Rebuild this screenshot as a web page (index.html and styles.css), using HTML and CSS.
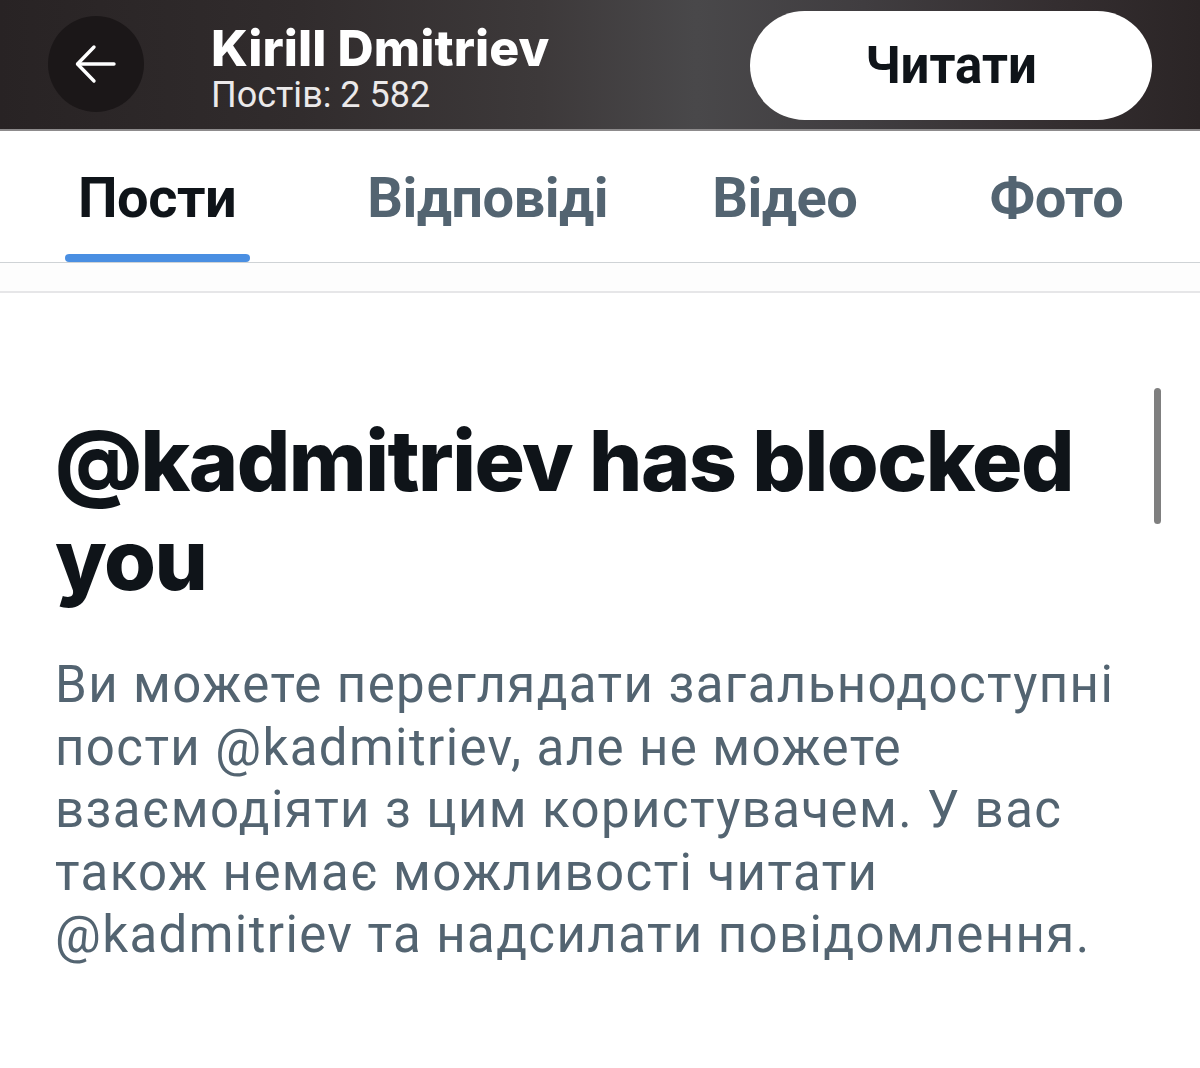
FILE: index.html
```html
<!DOCTYPE html>
<html lang="uk">
<head>
<meta charset="utf-8">
<title>Kirill Dmitriev</title>
<link rel="stylesheet" href="styles.css">
</head>
<body>
<div class="page">
  <header class="topbar">
    <div class="back">
      <svg width="44" height="44" viewBox="0 0 44 44" fill="none" stroke="#fff" stroke-width="3.4" stroke-linecap="round" stroke-linejoin="round">
        <path d="M40 22H4"/>
        <path d="M20 5L3.5 22L20 39"/>
      </svg>
    </div>
    <div class="title">
      <div class="name">Kirill Dmitriev</div>
      <div class="count">Постів: 2 582</div>
    </div>
    <button class="follow">Читати</button>
  </header>

  <nav class="tabs">
    <div class="tab tab-posts active">Пости<span class="indicator"></span></div>
    <div class="tab tab-replies">Відповіді</div>
    <div class="tab tab-video">Відео</div>
    <div class="tab tab-photo">Фото</div>
  </nav>
  <div class="gap-row"></div>

  <main class="blocked">
    <h1 class="blocked-title">@kadmitriev has blocked you</h1>
    <p class="blocked-text">Ви можете переглядати загальнодоступні пости @kadmitriev, але не можете взаємодіяти з цим користувачем. У вас також немає можливості читати @kadmitriev та надсилати повідомлення.</p>
  </main>

  <div class="scrollbar"></div>
</div>
</body>
</html>
```

FILE: styles.css
```css
* { box-sizing: border-box; }
html, body { margin: 0; padding: 0; background: #ffffff; }
body { font-family: Roboto, "Noto Sans", sans-serif; }

.page {
  position: relative;
  width: 1200px;
  height: 1068px;
  overflow: hidden;
  background: #ffffff;
}

.topbar {
  height: 131px;
  display: flex;
  align-items: center;
  padding-left: 48px;
  padding-right: 48px;
  background: linear-gradient(90deg, #282324 0%, #312c2d 25%, #3d393a 45%, #49484a 58%, #403d40 72%, #342e30 88%, #2b2526 100%);
  border-bottom: 2px solid #8d8b8c;
}

.back {
  width: 96px;
  height: 96px;
  border-radius: 50%;
  background: #1b1718;
  display: flex;
  align-items: center;
  justify-content: center;
  flex: none;
  margin-top: -1px;
}

.title {
  align-self: flex-start;
  margin-top: 21px;
  margin-left: 67px;
  color: #ffffff;
  display: flex;
  flex-direction: column;
}

.name {
  font-family: Inter, "Noto Sans", sans-serif;
  font-weight: 800;
  font-size: 50px;
  line-height: 54px;
  letter-spacing: 0.1px;
}

.count {
  font-family: Roboto, sans-serif;
  font-weight: 400;
  font-size: 36px;
  line-height: 40px;
  color: #ebe9ea;
}

.follow {
  margin-left: auto;
  width: 402px;
  height: 109px;
  border: none;
  border-radius: 55px;
  background: #ffffff;
  color: #0f1419;
  font-family: Roboto, sans-serif;
  font-weight: 700;
  font-size: 51px;
  padding: 0;
  margin-top: 2px;
}

.tabs {
  height: 132px;
  display: flex;
  align-items: flex-start;
  border-bottom: 1px solid #cfd3d6;
  padding-top: 38px;
}

.tab {
  position: relative;
  font-family: Roboto, sans-serif;
  font-weight: 700;
  font-size: 56px;
  line-height: 58px;
  color: #536471;
  letter-spacing: -0.5px;
}

.tab.active { color: #0f1419; }

.tab-posts { margin-left: 78px; }
.tab-replies { margin-left: 131px; }
.tab-video { margin-left: 104px; }
.tab-photo { margin-left: 132px; }

.indicator {
  position: absolute;
  left: -13px;
  right: -14px;
  top: 85px;
  height: 8px;
  border-radius: 4px;
  background: #4a8fe2;
}

.gap-row {
  height: 30px;
  border-bottom: 2px solid #e6e6e8;
  background: #fdfdfd;
}

.blocked {
  padding: 118px 55px 0 55px;
}

.blocked-title {
  margin: 0;
  font-family: Inter, "Noto Sans", sans-serif;
  font-weight: 800;
  font-size: 84px;
  line-height: 99px;
  color: #0f1419;
  letter-spacing: -1.5px;
}

.blocked-text {
  margin: 45px 0 0 0;
  font-family: Roboto, sans-serif;
  font-weight: 400;
  font-size: 51px;
  line-height: 62.5px;
  color: #536471;
  letter-spacing: 1.4px;
  width: 1090px;
}

.scrollbar {
  position: absolute;
  left: 1154px;
  top: 388px;
  width: 7px;
  height: 136px;
  border-radius: 4px;
  background: #7f7f7f;
}
```
